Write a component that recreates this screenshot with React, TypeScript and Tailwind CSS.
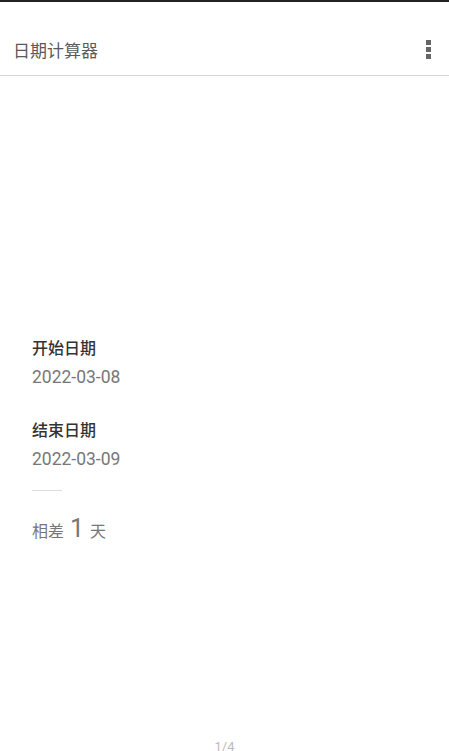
export default function App() {
  return (
    <div
      className="flex h-[751px] w-[449px] flex-col overflow-hidden bg-white border-t-2 border-[#222]"
      style={{ fontFamily: '"Noto Sans CJK SC", "Noto Sans", sans-serif' }}
    >
      {/* toolbar */}
      <header className="flex h-[74px] shrink-0 items-center justify-between border-b border-[#d4d4d4] pl-[13px] pr-[18px] pt-[22px]">
        <span className="text-[17px] leading-6 text-[#5a5a5a]">日期计算器</span>
        <div className="flex flex-col gap-[2px]">
          <span className="h-[5px] w-[5px] bg-[#666]" />
          <span className="h-[5px] w-[5px] bg-[#666]" />
          <span className="h-[5px] w-[5px] bg-[#666]" />
        </div>
      </header>

      <main className="flex-1 px-[32px] pt-[259px]">
        <div className="text-[16px] leading-6 font-medium text-[#333]">开始日期</div>
        <div className="mt-[6px] text-[17.5px] leading-6 text-[#777]" style={{ fontFamily: 'Roboto, sans-serif' }}>
          2022-03-08
        </div>

        <div className="mt-[28px] text-[16px] leading-6 font-medium text-[#333]">结束日期</div>
        <div className="mt-[6px] text-[17.5px] leading-6 text-[#777]" style={{ fontFamily: 'Roboto, sans-serif' }}>
          2022-03-09
        </div>

        <div className="mt-[19px] h-px w-[30px] bg-[#ddd]" />

        <div className="mt-[26px] flex items-baseline text-[16px] text-[#777]">
          <span>相差</span>
          <span className="mx-[6px] text-[25px] leading-6" style={{ fontFamily: 'Roboto, sans-serif' }}>1</span>
          <span>天</span>
        </div>
      </main>

      <div className="h-[12px] text-center text-[13px] leading-[16px] text-[#bbb]" style={{ fontFamily: 'Roboto, sans-serif' }}>
        1/4
      </div>
    </div>
  )
}
